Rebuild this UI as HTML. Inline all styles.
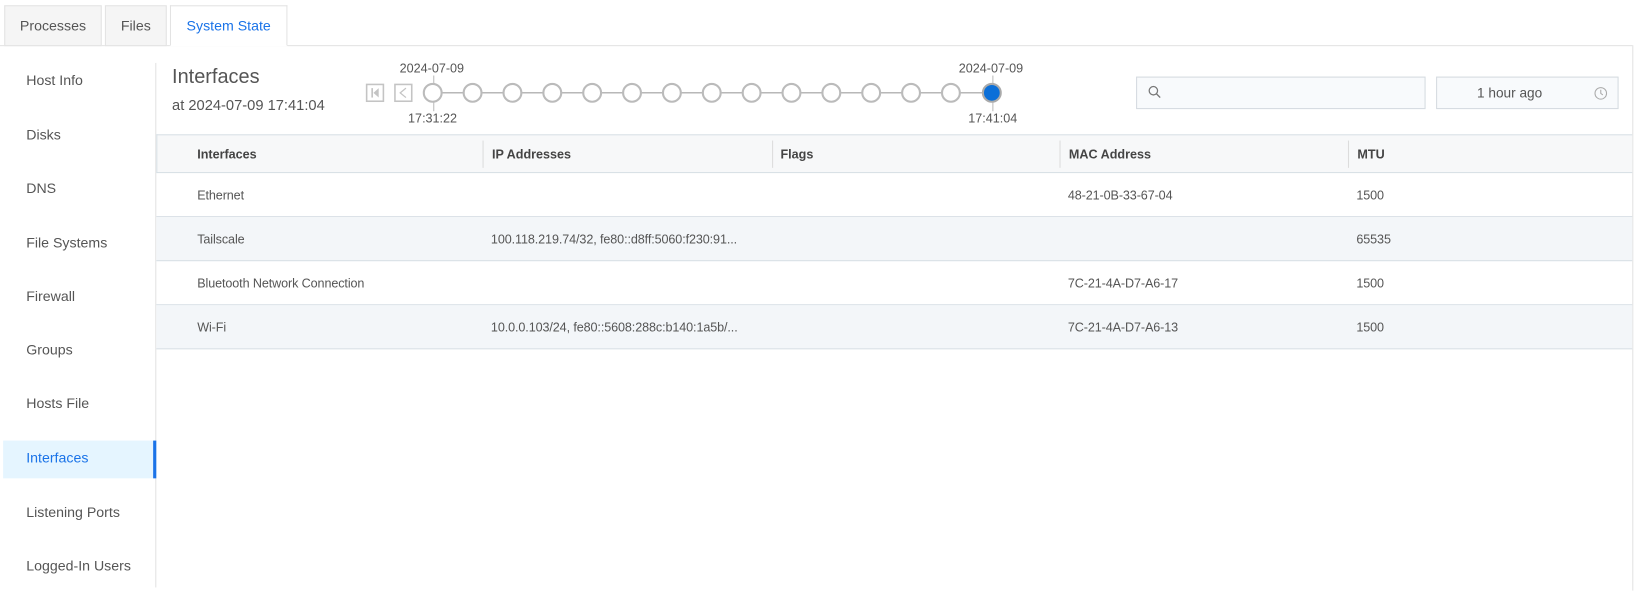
<!DOCTYPE html>
<html><head><meta charset="utf-8"><style>
*{box-sizing:border-box;margin:0;padding:0}
body{width:1645px;height:586px;overflow:hidden;background:#fff;font-family:"Liberation Sans",sans-serif;color:#555}
#w{position:absolute;left:0;top:0;width:1568px;height:559px;transform:scale(1.049);transform-origin:0 0}
.a{position:absolute}
.tab{position:absolute;top:5px;height:39px;border:1px solid #e3e3e3;background:#f5f5f5;font-size:13.5px;line-height:38px;text-align:center;color:#555}
.side{position:absolute;left:25px;font-size:13.5px;color:#555}
.row{position:absolute;left:149px;width:1407px;height:42px;border-bottom:1px solid #d8e0e6}
.c{position:absolute;top:14px;font-size:12px;color:#555;letter-spacing:-0.1px}
.h{position:absolute;top:11px;font-size:12px;font-weight:bold;color:#444}
.dv{position:absolute;top:5px;width:1px;height:26px;background:#dcdcdc}
.ci{position:absolute;top:79px;width:19px;height:19px;border:2px solid #bbb;border-radius:50%;background:#fff}
.tl{position:absolute;font-size:12px;color:#555}
</style></head><body><div id="w">
<div class="a" style="left:0;top:43px;width:1556px;height:1px;background:#e3e3e3"></div>
<div class="tab" style="left:4px;width:93px">Processes</div>
<div class="tab" style="left:100px;width:59px">Files</div>
<div class="tab" style="left:162px;width:112px;background:#fff;border-bottom-color:#fff;color:#1a73e8">System State</div>
<div class="a" style="left:1556px;top:43px;width:1px;height:520px;background:#e3e3e3"></div>
<div class="a" style="left:148px;top:60px;width:1px;height:500px;background:#e3e3e3"></div>
<div class="a" style="left:3px;top:420px;width:146px;height:36px;background:#e5f5ff;border-right:3px solid #1a73e8"></div>
<div class="side" style="top:69px">Host Info</div>
<div class="side" style="top:121px">Disks</div>
<div class="side" style="top:172px">DNS</div>
<div class="side" style="top:224px">File Systems</div>
<div class="side" style="top:275px">Firewall</div>
<div class="side" style="top:326px">Groups</div>
<div class="side" style="top:377px">Hosts File</div>
<div class="side" style="top:429px;color:#1a73e8">Interfaces</div>
<div class="side" style="top:481px">Listening Ports</div>
<div class="side" style="top:532px">Logged-In Users</div>
<div class="a" style="left:164px;top:63px;font-size:19px;color:#555">Interfaces</div>
<div class="a" style="left:164px;top:92px;font-size:14px;color:#555">at 2024-07-09 17:41:04</div>
<svg class="a" style="left:348px;top:79px" width="48" height="20"><rect x="1.5" y="1.5" width="16" height="16" fill="none" stroke="#c4c4c4" stroke-width="1.5"/><rect x="6" y="5" width="1.6" height="9" fill="#c4c4c4"/><path d="M13 5 L8 9.5 L13 14Z" fill="#c4c4c4"/><rect x="28.5" y="1.5" width="16" height="16" fill="none" stroke="#c4c4c4" stroke-width="1.5"/><path d="M39 5 L33.5 9.5 L39 14" fill="none" stroke="#c4c4c4" stroke-width="1.2"/></svg>
<div class="a" style="left:413px;top:88px;width:533px;height:1px;background:#999"></div>
<div class="a" style="left:413px;top:72px;width:1px;height:34px;background:#bbb"></div>
<div class="a" style="left:946px;top:72px;width:1px;height:34px;background:#bbb"></div>
<div class="ci" style="left:403px"></div><div class="ci" style="left:441px"></div><div class="ci" style="left:479px"></div><div class="ci" style="left:517px"></div><div class="ci" style="left:555px"></div><div class="ci" style="left:593px"></div><div class="ci" style="left:631px"></div><div class="ci" style="left:669px"></div><div class="ci" style="left:707px"></div><div class="ci" style="left:745px"></div><div class="ci" style="left:783px"></div><div class="ci" style="left:821px"></div><div class="ci" style="left:859px"></div><div class="ci" style="left:897px"></div>
<div class="ci" style="left:936px;background:#0b6fd8;border-color:#aaa"></div>
<div class="tl" style="left:381px;top:58px">2024-07-09</div>
<div class="tl" style="left:389px;top:106px">17:31:22</div>
<div class="tl" style="left:914px;top:58px">2024-07-09</div>
<div class="tl" style="left:923px;top:106px">17:41:04</div>
<div class="a" style="left:1083px;top:73px;width:276px;height:31px;border:1px solid #d5dbe0;background:#f8fafc"></div>
<svg class="a" style="left:1094px;top:81px" width="14" height="14"><circle cx="5.5" cy="5.5" r="4" fill="none" stroke="#777" stroke-width="1.2"/><path d="M8.5 8.5 L12 12" stroke="#777" stroke-width="1.3"/></svg>
<div class="a" style="left:1369px;top:73px;width:174px;height:31px;border:1px solid #d5dbe0;background:#f8fafc;font-size:13px;line-height:29px;padding-left:38px;color:#555">1 hour ago</div>
<svg class="a" style="left:1519px;top:82px" width="14" height="14"><circle cx="7" cy="7" r="5.5" fill="none" stroke="#aaa" stroke-width="1"/><path d="M7 3.5 V7 L9 8.5" fill="none" stroke="#aaa" stroke-width="1"/></svg>
<div class="a" style="left:149px;top:128px;width:1407px;height:37px;background:#f7f8f9;border-top:1px solid #d8e0e6;border-bottom:1px solid #d8e0e6;border-left:1px solid #d8e0e6">
<div class="h" style="left:38px">Interfaces</div><div class="dv" style="left:310px"></div>
<div class="h" style="left:319px">IP Addresses</div><div class="dv" style="left:586px"></div>
<div class="h" style="left:594px">Flags</div><div class="dv" style="left:860px"></div>
<div class="h" style="left:869px">MAC Address</div><div class="dv" style="left:1135px"></div>
<div class="h" style="left:1144px">MTU</div></div>
<div class="row" style="top:165px"><div class="c" style="left:39px">Ethernet</div><div class="c" style="left:869px">48-21-0B-33-67-04</div><div class="c" style="left:1144px">1500</div></div>
<div class="row" style="top:207px;background:#f3f6f9"><div class="c" style="left:39px">Tailscale</div><div class="c" style="left:319px">100.118.219.74/32, fe80::d8ff:5060:f230:91...</div><div class="c" style="left:1144px">65535</div></div>
<div class="row" style="top:249px"><div class="c" style="left:39px">Bluetooth Network Connection</div><div class="c" style="left:869px">7C-21-4A-D7-A6-17</div><div class="c" style="left:1144px">1500</div></div>
<div class="row" style="top:291px;background:#f3f6f9"><div class="c" style="left:39px">Wi-Fi</div><div class="c" style="left:319px">10.0.0.103/24, fe80::5608:288c:b140:1a5b/...</div><div class="c" style="left:869px">7C-21-4A-D7-A6-13</div><div class="c" style="left:1144px">1500</div></div>
</div></body></html>
